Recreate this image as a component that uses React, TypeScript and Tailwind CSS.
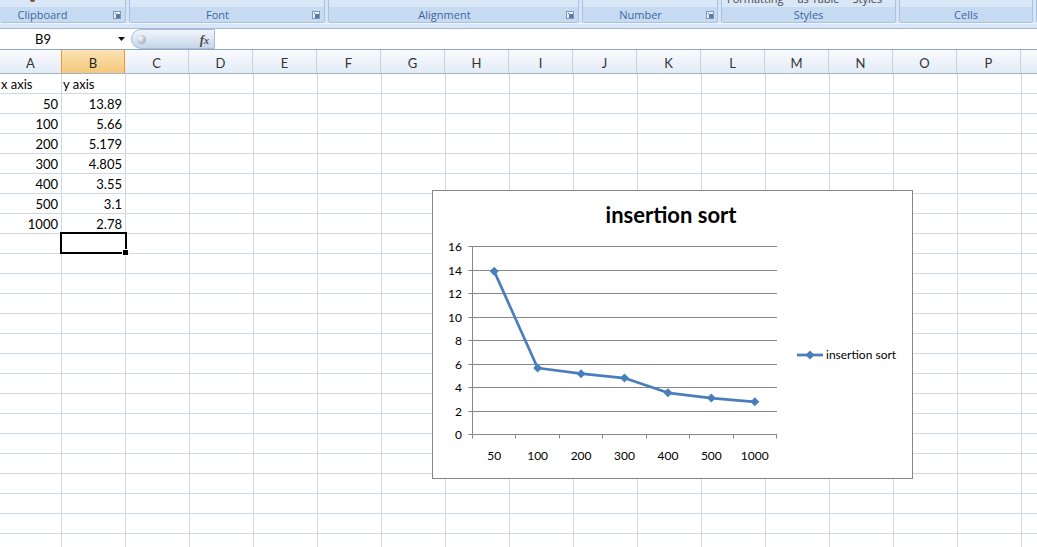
import React from "react";

const COLS = ["A", "B", "C", "D", "E", "F", "G", "H", "I", "J", "K", "L", "M", "N", "O", "P"];
const colWidth = (i: number) => (i === 0 ? "w-[62px]" : "w-[64px]");

type CellVal = { t: string; align: "l" | "r" };
const DATA: Record<number, [CellVal, CellVal]> = {
  0: [{ t: "x axis", align: "l" }, { t: "y axis", align: "l" }],
  1: [{ t: "50", align: "r" }, { t: "13.89", align: "r" }],
  2: [{ t: "100", align: "r" }, { t: "5.66", align: "r" }],
  3: [{ t: "200", align: "r" }, { t: "5.179", align: "r" }],
  4: [{ t: "300", align: "r" }, { t: "4.805", align: "r" }],
  5: [{ t: "400", align: "r" }, { t: "3.55", align: "r" }],
  6: [{ t: "500", align: "r" }, { t: "3.1", align: "r" }],
  7: [{ t: "1000", align: "r" }, { t: "2.78", align: "r" }],
};

function Launcher() {
  return (
    <svg width="8" height="8" viewBox="0 0 8 8" className="shrink-0">
      <rect x="0.5" y="0.5" width="7" height="7" fill="#eaf1fa" stroke="#7d98bf" />
      <rect x="3" y="3" width="4" height="4" fill="#5a7aa6" />
      <path d="M2 2 L5 5" stroke="#5a7aa6" strokeWidth="1" />
    </svg>
  );
}

function Group({
  w,
  label,
  labelW,
  launcherMl,
  noLeft,
  top,
}: {
  w: string;
  label: string;
  labelW?: string;
  launcherMl?: string;
  noLeft?: boolean;
  top?: React.ReactNode;
}) {
  return (
    <div
      className={`${w} shrink-0 flex flex-col rounded-b-[3px] border-b border-r border-[#a9c2e2] overflow-hidden ${
        noLeft ? "" : "border-l"
      }`}
    >
      <div className="h-[7px] bg-[#dae7f7] relative overflow-hidden">{top}</div>
      <div className="flex-1 flex items-center bg-[#c6daf2] text-[11px] text-[#3e669e] font-['Open_Sans',sans-serif] leading-none">
        {labelW ? (
          <>
            <span className={`${labelW} text-center`}>{label}</span>
            <span className={launcherMl}>
              <Launcher />
            </span>
          </>
        ) : (
          <span className="flex-1 text-center">{label}</span>
        )}
      </div>
    </div>
  );
}

function Ribbon() {
  return (
    <div className="h-[23px] flex gap-[3px] bg-[#d6e4f5] overflow-hidden">
      <Group
        w="w-[126px]"
        label="Clipboard"
        labelW="w-[85px]"
        launcherMl="ml-[28px] flex"
        noLeft
        top={<div className="absolute left-[30px] top-0 w-[5px] h-[2px] bg-[#7a5a2e] rounded-b-[2px]" />}
      />
      <Group w="w-[196px]" label="Font" labelW="w-[175px]" launcherMl="ml-[7px] flex" />
      <Group w="w-[251px]" label="Alignment" labelW="w-[231px]" launcherMl="ml-[6px] flex" />
      <Group w="w-[136px]" label="Number" labelW="w-[115px]" launcherMl="ml-[8px] flex" />
      <Group
        w="w-[175px]"
        label="Styles"
        top={
          <div className="absolute left-[5px] top-[-7px] flex text-[11px] text-[#4a4a4a] font-['Open_Sans',sans-serif] leading-[11px] whitespace-nowrap">
            <span>Formatting</span>
            <span className="ml-[14px]">as Table</span>
            <span className="ml-[13px]">Styles</span>
          </div>
        }
      />
      <Group w="w-[134px]" label="Cells" />
      <Group w="w-[60px]" label="" />
    </div>
  );
}

function FormulaBar() {
  return (
    <>
      <div className="h-[5px] bg-[#d9e6f5] border-t border-[#eef4fb]" />
      <div className="h-[21px] flex border-t border-[#a4bad6] bg-white">
        <div className="w-[130px] shrink-0 flex items-center pt-[1px]">
          <span className="w-[86px] text-center text-[13px] text-black font-['Lato',sans-serif] leading-none">B9</span>
          <svg width="8" height="5" viewBox="0 0 8 5" className="ml-[32px]">
            <path d="M0 0 L7 0 L3.5 4 Z" fill="#111" />
          </svg>
        </div>
        <div className="ml-[1px] w-[84px] shrink-0 h-full rounded-l-[10px] border border-r border-[#a9bcd6] bg-gradient-to-b from-[#f2f6fb] via-[#dce6f2] to-[#c6d5e8] flex items-center">
          <div className="ml-[5px] w-[9px] h-[9px] rounded-full bg-[radial-gradient(circle_at_35%_35%,#ffffff,#a9b2bd_70%,#8e98a4)]" />
          <span className="ml-auto mr-[5px] text-[13px] italic font-bold font-['Liberation_Serif',serif] text-[#4b4b4b] leading-none">
            f<span className="text-[10px]">x</span>
          </span>
        </div>
        <div className="flex-1" />
      </div>
    </>
  );
}

function HeaderRow() {
  return (
    <div className="h-[25px] flex border-t border-[#8ea6c4] border-b border-b-[#9eb6ce] bg-gradient-to-b from-[#f9fbfd] to-[#e3ebf6]">
      {COLS.map((c, i) => (
        <div
          key={c}
          className={`${colWidth(i)} shrink-0 flex items-center justify-center pt-[3px] border-r text-[13px] leading-none font-['Lato',sans-serif] ${
            c === "B"
              ? "bg-gradient-to-b from-[#fae2b2] to-[#f5c87a] border-[#f29536] border-l border-l-[#f29536] -ml-[1px] text-[#222]"
              : "border-[#c5d3e4] text-[#333]"
          }`}
        >
          {c}
        </div>
      ))}
      <div className="flex-1" />
    </div>
  );
}

function Grid() {
  const rows = Array.from({ length: 24 }, (_, r) => r);
  return (
    <div className="flex flex-col">
      {rows.map((r) => (
        <div key={r} className="h-[20px] flex shrink-0">
          {COLS.map((c, i) => {
            const v = i < 2 && DATA[r] ? DATA[r][i] : null;
            return (
              <div
                key={c}
                className={`${colWidth(i)} shrink-0 h-full border-r border-b border-[#d0d7e5] flex items-end pb-[2px] text-[13px] leading-none text-black font-['Lato',sans-serif] whitespace-nowrap overflow-visible ${
                  v && v.align === "r" ? "justify-end pr-[3px]" : "justify-start pl-[1px]"
                } ${i === 0 && v && v.align === "l" ? "pl-0" : ""}`}
              >
                {v ? v.t : ""}
              </div>
            );
          })}
          <div className="flex-1 h-full border-b border-[#d0d7e5]" />
        </div>
      ))}
    </div>
  );
}

const VALS = [13.89, 5.66, 5.179, 4.805, 3.55, 3.1, 2.78];
const LABELS = ["50", "100", "200", "300", "400", "500", "1000"];

function Diamond({ x, y, r = 4.5 }: { x: number; y: number; r?: number }) {
  return <polygon points={`${x},${y - r} ${x + r},${y} ${x},${y + r} ${x - r},${y}`} fill="#4a7ebb" />;
}

function Chart() {
  const x0 = 39.5;
  const x1 = 343.5;
  const cw = (x1 - x0) / 7;
  const yOf = (v: number) => 243.5 - v * 11.75;
  const gy = (v: number) => Math.round(yOf(v) - 0.5) + 0.5;
  const grid = [0, 2, 4, 6, 8, 10, 12, 14, 16];
  const pts = VALS.map((v, i) => [x0 + cw * (i + 0.5), yOf(v)] as [number, number]);
  const font = "Lato, sans-serif";
  return (
    <div className="absolute left-[432px] top-[190px] w-[481px] h-[289px] border border-[#868686] bg-white">
      <svg width="479" height="287" viewBox="0 0 479 287">
        <text x="238" y="32" textAnchor="middle" fontFamily={font} fontWeight="bold" fontSize="22" fill="#000">
          insertion sort
        </text>
        {grid.map((v) => (
          <g key={v}>
            {v > 0 && <line x1={x0} x2={x1 + 0.5} y1={gy(v)} y2={gy(v)} stroke="#868686" strokeWidth="1" />}
            <line x1={x0 - 4} x2={x0} y1={gy(v)} y2={gy(v)} stroke="#868686" strokeWidth="1" />
            <text x="29" y={gy(v) + 4} textAnchor="end" fontFamily={font} fontSize="12" fill="#000">
              {v}
            </text>
          </g>
        ))}
        <line x1={x0} x2={x0} y1={gy(16)} y2={gy(0)} stroke="#868686" strokeWidth="1" />
        <line x1={x0} x2={x1 + 0.5} y1={gy(0)} y2={gy(0)} stroke="#868686" strokeWidth="1" />
        {Array.from({ length: 8 }, (_, i) => {
          const x = Math.round(x0 + cw * i - 0.5) + 0.5;
          return <line key={i} x1={x} x2={x} y1={gy(0)} y2={gy(0) + 4} stroke="#868686" strokeWidth="1" />;
        })}
        {LABELS.map((l, i) => (
          <text key={l} x={x0 + cw * (i + 0.5)} y="269" textAnchor="middle" fontFamily={font} fontSize="12" fill="#000">
            {l}
          </text>
        ))}
        <polyline
          points={pts.map((p) => p.join(",")).join(" ")}
          fill="none"
          stroke="#4a7ebb"
          strokeWidth="2.75"
          strokeLinejoin="round"
          strokeLinecap="round"
        />
        {pts.map((p, i) => (
          <Diamond key={i} x={p[0]} y={p[1]} />
        ))}
        <line x1="364" x2="390" y1="164" y2="164" stroke="#4a7ebb" strokeWidth="2.75" />
        <Diamond x={377} y={164} />
        <text x="393" y="168" fontFamily={font} fontSize="12" fill="#000">
          insertion sort
        </text>
      </svg>
    </div>
  );
}

export default function App() {
  return (
    <div className="w-[1037px] h-[547px] overflow-hidden relative bg-white font-['Lato',sans-serif]">
      <Ribbon />
      <FormulaBar />
      <HeaderRow />
      <Grid />
      <div className="absolute left-[60px] top-[232px] w-[67px] h-[22px] border-2 border-black" />
      <div className="absolute left-[123px] top-[250px] w-[5px] h-[5px] bg-black outline outline-1 outline-white" />
      <Chart />
    </div>
  );
}
